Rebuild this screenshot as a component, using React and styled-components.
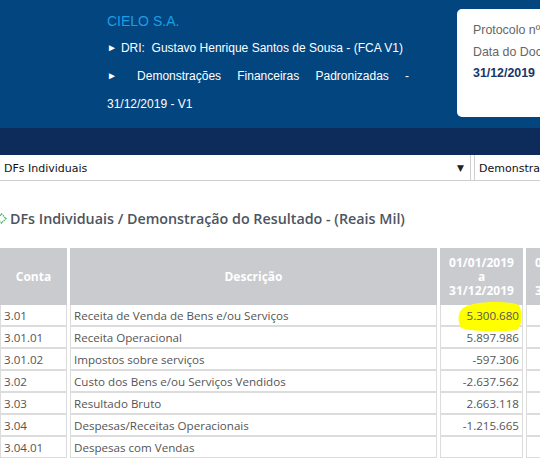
import React from "react";
import styled, { createGlobalStyle } from "styled-components";

const Global = createGlobalStyle`
  html, body { margin: 0; padding: 0; background: #fff; overflow: hidden; }
  body { width: 540px; height: 458px; }
  #root { width: 720px; }
`;

const Header = styled.header`
  background: #02457f;
  height: 128px;
  display: flex;
  align-items: flex-start;
  padding-left: 107px;
  box-sizing: border-box;
`;

const Info = styled.div`
  width: 302px;
  padding-top: 12px;
  font-family: "Liberation Sans", Arial, sans-serif;
  color: #fff;
`;

const Company = styled.div`
  color: #1c9ee6;
  font-size: 14px;
  line-height: 18px;
  margin-bottom: 4px;
`;

const Line = styled.div`
  font-size: 12px;
  line-height: 28px;
  white-space: ${(p) => (p.$justify ? "normal" : "nowrap")};
  text-align: ${(p) => (p.$justify ? "justify" : "left")};
  text-align-last: left;
`;

const Bullet = styled.span`
  font-size: 10px;
  display: inline-block;
  vertical-align: 1px;
  margin-right: 4px;
`;

const Card = styled.div`
  margin-left: 48px;
  margin-top: 9px;
  width: 200px;
  height: 108px;
  background: #fff;
  border-radius: 5px;
  box-sizing: border-box;
  padding: 10px 16px;
  font-family: "Liberation Sans", Arial, sans-serif;
  font-size: 12.4px;
`;

const CardLabel = styled.div`
  color: #666;
  line-height: 22px;
`;

const CardValue = styled.div`
  color: #1a3566;
  font-weight: bold;
  line-height: 20px;
`;

const Band = styled.div`
  background: #0e2c5b;
  height: 27px;
`;

const Selects = styled.div`
  display: flex;
  gap: 3px;
  border-bottom: 1px solid #cfcfcf;
`;

const Select = styled.div`
  width: ${(p) => p.$w}px;
  height: 25px;
  box-sizing: border-box;
  border: 1px solid #cfcfcf;
  border-top: none;
  border-bottom: none;
  background: #fff;
  display: flex;
  align-items: center;
  justify-content: space-between;
  padding: 1px 6px 0 4px;
  font-family: "DejaVu Sans", Tahoma, sans-serif;
  font-size: 11px;
  color: #111;
  &:first-child { border-left: none; }
`;

const Arrow = styled.span`
  font-size: 9px;
  color: #222;
`;

const Title = styled.h2`
  margin: 27px 0 0 0;
  display: flex;
  align-items: center;
  gap: 3px;
  font-family: "Open Sans", sans-serif;
  font-weight: 600;
  font-size: 14.3px;
  color: #4c5560;
  height: 20px;
`;

const Table = styled.table`
  margin-top: 20px;
  border-collapse: separate;
  border-spacing: 3px 0;
  margin-left: -3px;
  font-family: "Open Sans", sans-serif;
  font-size: 11.6px;
  color: #555;
`;

const Th = styled.th`
  background: #c9cbce;
  color: #fff;
  font-weight: bold;
  height: 57px;
  padding: 0;
  width: ${(p) => p.$w}px;
  line-height: 14px;
  font-size: 12px;
`;

const Td = styled.td`
  box-sizing: border-box;
  height: 22px;
  padding: 0 3px;
  border: 1px solid #dcdcdc;
  border-top: none;
  border-bottom: 2px solid #dcdcdc;
  text-align: ${(p) => (p.$right ? "right" : "left")};
  position: relative;
  white-space: nowrap;
  line-height: 19px;
`;

const Mark = styled.svg`
  position: absolute;
  left: 16px;
  top: -5px;
  width: 66px;
  height: 32px;
`;

const Value = styled.span`
  position: relative;
`;

const rows = [
  ["3.01", "Receita de Venda de Bens e/ou Serviços", "5.300.680", true],
  ["3.01.01", "Receita Operacional", "5.897.986"],
  ["3.01.02", "Impostos sobre serviços", "-597.306"],
  ["3.02", "Custo dos Bens e/ou Serviços Vendidos", "-2.637.562"],
  ["3.03", "Resultado Bruto", "2.663.118"],
  ["3.04", "Despesas/Receitas Operacionais", "-1.215.665"],
  ["3.04.01", "Despesas com Vendas", ""],
];

const Icon = () => (
  <svg width="7" height="11" viewBox="4 0 7 11">
    <path d="M1 5.5 L5.5 1 L10 5.5 L5.5 10 Z" fill="none" stroke="#25a83f" strokeWidth="1.3" strokeDasharray="1.2 0.9" />
  </svg>
);

export default function App() {
  return (
    <>
      <Global />
      <Header>
        <Info>
          <Company>CIELO S.A.</Company>
          <Line>
            <Bullet>►</Bullet>DRI:&nbsp; Gustavo Henrique Santos de Sousa - (FCA V1)
          </Line>
          <Line $justify>
            <Bullet>►</Bullet> Demonstrações Financeiras Padronizadas - 31/12/2019 - V1
          </Line>
        </Info>
        <Card>
          <CardLabel>Protocolo nº</CardLabel>
          <CardLabel>Data do Documento</CardLabel>
          <CardValue>31/12/2019</CardValue>
        </Card>
      </Header>
      <Band />
      <Selects>
        <Select $w={471}>
          <span>DFs Individuais</span>
          <Arrow>▼</Arrow>
        </Select>
        <Select $w={240}>
          <span>Demonstração do Resultado</span>
          <Arrow>▼</Arrow>
        </Select>
      </Selects>
      <Title>
        <Icon />
        DFs Individuais / Demonstração do Resultado - (Reais Mil)
      </Title>
      <Table>
        <thead>
          <tr>
            <Th $w={67}>Conta</Th>
            <Th $w={367}>Descrição</Th>
            <Th $w={83}>01/01/2019<br />a<br />31/12/2019</Th>
            <Th $w={83}>01/01/2018<br />a<br />31/12/2018</Th>
          </tr>
        </thead>
        <tbody>
          {rows.map(([c, d, v, hl]) => (
            <tr key={c}>
              <Td>{c}</Td>
              <Td>{d}</Td>
              <Td $right>
                {hl && (
                  <Mark viewBox="0 0 66 32">
                    <path d="M6 8 C14 1 50 0 62 5 C66 12 65 26 60 30 C44 32 16 32 4 28 C0 20 1 12 6 8 Z" fill="#ffff00" />
                  </Mark>
                )}
                <Value>{v}</Value>
              </Td>
              <Td $right></Td>
            </tr>
          ))}
        </tbody>
      </Table>
    </>
  );
}
